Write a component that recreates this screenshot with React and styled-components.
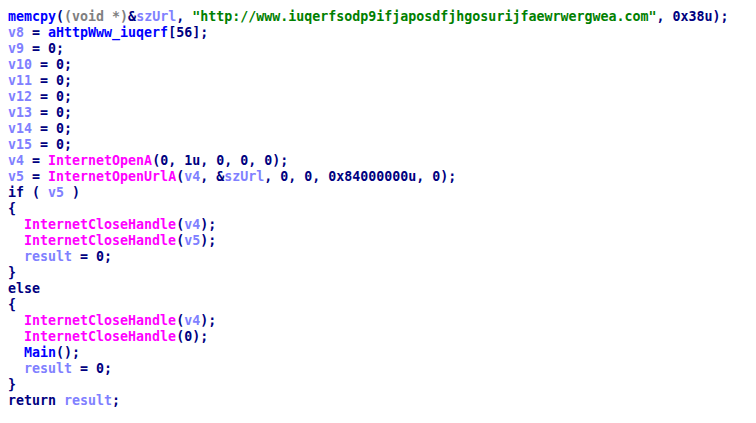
import React from 'react';
import styled, { createGlobalStyle } from 'styled-components';

const GlobalStyle = createGlobalStyle`
  body {
    margin: 8px;
    background: #ffffff;
  }
`;

const colors = {
  txt: '#000080',
  fn: '#0000ff',
  imp: '#ff00ff',
  lv: '#8080ff',
  str: '#008000',
  kw: '#808080',
};

const Listing = styled.pre`
  margin: 0;
  padding-top: 1px;
  font-family: "DejaVu Sans Mono", "Liberation Mono", monospace;
  font-weight: bold;
  font-size: 13.3px;
  line-height: 16px;
  color: ${colors.txt};
  white-space: pre;
`;

const Line = styled.div`
  height: 16px;
`;

const Tok = styled.span`
  color: ${(p) => colors[p.$k] || colors.txt};
`;

// each line: list of [kind, text]
const code = [
  [['fn', 'memcpy'], ['txt', '('], ['kw', '(void *)'], ['txt', '&'], ['lv', 'szUrl'], ['txt', ', '], ['str', '"http://www.iuqerfsodp9ifjaposdfjhgosurijfaewrwergwea.com"'], ['txt', ', 0x38u);']],
  [['lv', 'v8'], ['txt', ' = '], ['fn', 'aHttpWww_iuqerf'], ['txt', '[56];']],
  [['lv', 'v9'], ['txt', ' = 0;']],
  [['lv', 'v10'], ['txt', ' = 0;']],
  [['lv', 'v11'], ['txt', ' = 0;']],
  [['lv', 'v12'], ['txt', ' = 0;']],
  [['lv', 'v13'], ['txt', ' = 0;']],
  [['lv', 'v14'], ['txt', ' = 0;']],
  [['lv', 'v15'], ['txt', ' = 0;']],
  [['lv', 'v4'], ['txt', ' = '], ['imp', 'InternetOpenA'], ['txt', '(0, 1u, 0, 0, 0);']],
  [['lv', 'v5'], ['txt', ' = '], ['imp', 'InternetOpenUrlA'], ['txt', '('], ['lv', 'v4'], ['txt', ', &'], ['lv', 'szUrl'], ['txt', ', 0, 0, 0x84000000u, 0);']],
  [['txt', 'if ( '], ['lv', 'v5'], ['txt', ' )']],
  [['txt', '{']],
  [['txt', '  '], ['imp', 'InternetCloseHandle'], ['txt', '('], ['lv', 'v4'], ['txt', ');']],
  [['txt', '  '], ['imp', 'InternetCloseHandle'], ['txt', '('], ['lv', 'v5'], ['txt', ');']],
  [['txt', '  '], ['lv', 'result'], ['txt', ' = 0;']],
  [['txt', '}']],
  [['txt', 'else']],
  [['txt', '{']],
  [['txt', '  '], ['imp', 'InternetCloseHandle'], ['txt', '('], ['lv', 'v4'], ['txt', ');']],
  [['txt', '  '], ['imp', 'InternetCloseHandle'], ['txt', '(0);']],
  [['txt', '  '], ['fn', 'Main'], ['txt', '();']],
  [['txt', '  '], ['lv', 'result'], ['txt', ' = 0;']],
  [['txt', '}']],
  [['txt', 'return '], ['lv', 'result'], ['txt', ';']],
];

export default function App() {
  return (
    <>
      <GlobalStyle />
      <Listing>
        {code.map((line, i) => (
          <Line key={i}>
            {line.map(([k, t], j) => (
              <Tok key={j} $k={k}>{t}</Tok>
            ))}
          </Line>
        ))}
      </Listing>
    </>
  );
}
